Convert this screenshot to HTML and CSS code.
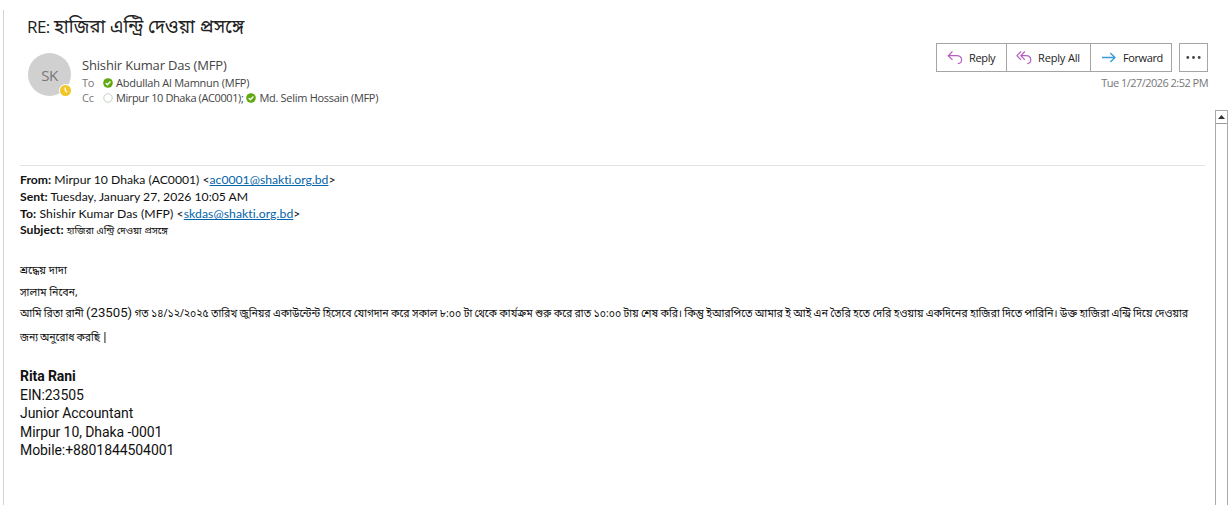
FILE: index.html
```html
<!DOCTYPE html>
<html lang="bn">
<head>
    <meta charset="utf-8">
    <title>Message</title>
    <link rel="stylesheet" href="styles.css">
</head>
<body>
    <div class="pane">
        <h1 class="subject"><span class="re">RE:</span> <span class="bn">হাজিরা এন্ট্রি দেওয়া প্রসঙ্গে</span></h1>
        <div class="header">
            <div class="avatar">SK
                <svg class="away" width="13" height="13" viewBox="0 0 13 13">
                    <circle cx="6.5" cy="6.5" r="6.5" fill="#fff"/>
                    <circle cx="6.5" cy="6.5" r="5.5" fill="#f2c627"/>
                    <path d="M6.2 3.6v3.2l2 1.5" fill="none" stroke="#fff" stroke-width="1.2"/>
                </svg>
            </div>
            <div class="people">
                <div class="sender"><span class="sender-name">Shishir Kumar Das (MFP)</span></div>
                <div class="row">
                    <span class="label">To</span>
                    <svg class="dot" width="10" height="10" viewBox="0 0 10 10"><circle cx="5" cy="5" r="4.8" fill="#5fa80f"/><path d="M2.7 5.1l1.7 1.7 3-3.2" fill="none" stroke="#fff" stroke-width="1.4"/></svg>
                    <span class="name">Abdullah Al Mamnun (MFP)</span>
                </div>
                <div class="row cc">
                    <span class="label">Cc</span>
                    <svg class="dot" width="10" height="10" viewBox="0 0 10 10"><circle cx="5" cy="5" r="4.2" fill="#fff" stroke="#c3d0c3"/></svg>
                    <span class="name">Mirpur 10 Dhaka (AC0001);</span>
                    <svg class="dot second" width="10" height="10" viewBox="0 0 10 10"><circle cx="5" cy="5" r="4.8" fill="#5fa80f"/><path d="M2.7 5.1l1.7 1.7 3-3.2" fill="none" stroke="#fff" stroke-width="1.4"/></svg>
                    <span class="name last">Md. Selim Hossain (MFP)</span>
                </div>
            </div>
            <div class="actions">
                <div class="buttons">
                    <div class="group">
                        <div class="btn reply">
                            <svg width="16" height="16" viewBox="0 0 16 16" fill="none" stroke="#b65fc0" stroke-width="1.2"><path d="M5.5 1.5L1.2 5.7l4.3 4.2M1.2 5.7h8.3c6.7 0 6.5 8 1.3 8"/></svg>
                            <span>Reply</span>
                        </div>
                        <div class="btn reply-all">
                            <svg width="16" height="16" viewBox="0 0 16 16" fill="none" stroke="#b65fc0" stroke-width="1.2"><path d="M5 1.5L1 5.7l4 4.2M8.8 1.5l-4 4.2 4 4.2M4.8 5.7h5.4c6 0 5.8 8 1 8"/></svg>
                            <span>Reply All</span>
                        </div>
                        <div class="btn forward">
                            <svg width="16" height="16" viewBox="0 0 16 16" fill="none" stroke="#3a9bd8" stroke-width="1.3"><path d="M1 7.5h13M9.3 3l4.7 4.5L9.3 12"/></svg>
                            <span>Forward</span>
                        </div>
                    </div>
                    <div class="more">
                        <svg width="15" height="3" viewBox="0 0 15 3" fill="#444"><circle cx="1.8" cy="1.5" r="1.4"/><circle cx="7.5" cy="1.5" r="1.4"/><circle cx="13.2" cy="1.5" r="1.4"/></svg>
                    </div>
                </div>
                <div class="date"><span>Tue 1/27/2026 2:52 PM</span></div>
            </div>
        </div>
        <div class="content">
            <div class="message">
                <div class="quoted">
                    <p><b>From:</b> Mirpur 10 Dhaka (AC0001) &lt;<a>ac0001@shakti.org.bd</a>&gt;</p>
                    <p><b>Sent:</b> Tuesday, January 27, 2026 10:05 AM</p>
                    <p class="to"><b>To:</b> Shishir Kumar Das (MFP) &lt;<a>skdas@shakti.org.bd</a>&gt;</p>
                    <p class="subj"><b>Subject:</b> <span class="bn">হাজিরা এন্ট্রি দেওয়া প্রসঙ্গে</span></p>
                </div>
                <div class="text bn">
                    <p>শ্রদ্ধেয় দাদা</p>
                    <p class="greeting">সালাম নিবেন,</p>
                    <p class="long">আমি রিতা রানী <span class="num">(23505)</span> গত ১৪/১২/২০২৫ তারিখ জুনিয়র একাউন্টেন্ট হিসেবে যোগদান করে সকাল ৮:০০ টা থেকে কার্যক্রম শুরু করে রাত ১০:০০ টায় শেষ করি। <span class="rest">কিন্তু ইআরপিতে আমার ই আই এন তৈরি হতে দেরি হওয়ায় একদিনের হাজিরা দিতে পারিনি। উক্ত হাজিরা এন্ট্রি দিয়ে দেওয়ার</span></p>
                    <p class="request">জন্য অনুরোধ করছি <span class="num bar">|</span></p>
                </div>
                <div class="signature">
                    <p><b>Rita Rani</b></p>
                    <p>EIN:23505</p>
                    <p>Junior Accountant</p>
                    <p>Mirpur 10, Dhaka -0001</p>
                    <p>Mobile:+8801844504001</p>
                </div>
            </div>
            <div class="scrollbar">
                <div class="up"><svg width="7" height="4" viewBox="0 0 7 4"><path d="M0 4L3.5 0 7 4z" fill="#333"/></svg></div>
            </div>
        </div>
    </div>
</body>
</html>
```
FILE: styles.css
```css
* {
    box-sizing: border-box;
}

body {
    margin: 0;
    height: 505px;
    padding: 10px 0 0 3px;
    overflow: hidden;
    background: #fff;
    font-family: "Open Sans", sans-serif;
    color: #222;
    white-space: nowrap;
}

p {
    margin: 0;
}

.bn {
    font-family: "Noto Sans Bengali", "Noto Sans", sans-serif;
}

.pane {
    height: 495px;
    border-left: 1px solid #d4d4d4;
}

.subject {
    margin: 0;
    height: 36px;
    padding-left: 23px;
    font-size: 17px;
    font-weight: 400;
    line-height: 34px;
}

.subject .re {
    letter-spacing: -0.6px;
}

.subject .bn {
    font-size: 18.4px;
}

.header {
    display: flex;
    height: 64px;
    padding-left: 24px;
}

.avatar {
    position: relative;
    width: 43px;
    height: 43px;
    margin-top: 7px;
    border-radius: 50%;
    background: #d0d0d0;
    color: #777;
    font-size: 15px;
    letter-spacing: -0.5px;
    line-height: 44px;
    text-align: center;
}

.away {
    position: absolute;
    right: -1px;
    bottom: -1px;
}

.people {
    margin: 11px 0 0 11px;
    color: #444;
    font-size: 11px;
}

.sender {
    height: 18px;
    font-size: 13px;
    line-height: 17px;
    letter-spacing: -0.17px;
}

.row {
    display: flex;
    align-items: center;
    height: 15px;
    letter-spacing: -0.24px;
}

.cc .name {
    letter-spacing: -0.4px;
}

.cc .last {
    letter-spacing: -0.3px;
}

.label {
    width: 21px;
    color: #777;
}

.dot {
    margin-right: 3px;
}

.dot.second {
    margin-left: 3px;
}

.actions {
    margin: -3px 21px 0 auto;
}

.buttons {
    display: flex;
    gap: 7px;
}

.group {
    display: flex;
    border: 1px solid #a5a5a5;
}

.btn {
    display: flex;
    align-items: center;
    height: 27px;
    padding-left: 10px;
    gap: 6px;
    font-size: 11px;
    letter-spacing: -0.35px;
}

.btn + .btn {
    border-left: 1px solid #a5a5a5;
}

.reply {
    width: 69px;
}

.reply-all {
    width: 84px;
    padding-left: 9px;
    letter-spacing: -0.15px;
}

.forward {
    width: 81px;
    letter-spacing: -0.4px;
}

.more {
    display: flex;
    align-items: center;
    justify-content: center;
    width: 29px;
    height: 29px;
    border: 1px solid #a5a5a5;
}

.date {
    margin-top: 3px;
    color: #777;
    font-size: 11px;
    line-height: 15px;
    text-align: right;
    letter-spacing: -0.53px;
}

.content {
    display: flex;
    height: 395px;
    padding-right: 1px;
}

.message {
    width: 1185px;
    height: 339px;
    margin: 55px auto 0 16px;
    padding-top: 5px;
    border-top: 1px solid #e3e3e3;
    color: #111;
}

.quoted {
    height: 68px;
    font-family: Lato, sans-serif;
    font-size: 12.2px;
    line-height: 17px;
    font-variant-ligatures: none;
}

.quoted .to {
    letter-spacing: 0.08px;
}

.quoted .subj {
    line-height: 15px;
}

.quoted a {
    color: #0563a8;
    text-decoration: underline;
}

.quoted .bn {
    font-size: 9.8px;
}

.text {
    height: 87px;
    margin-top: 21px;
    font-size: 11px;
    line-height: 22px;
}

.greeting {
    font-size: 10.6px;
}

.long {
    height: 23px;
    font-size: 10.5px;
    line-height: 21px;
    word-spacing: -0.35px;
}

.rest {
    font-size: 10.7px;
    word-spacing: -0.5px;
}

.request {
    font-size: 10.4px;
    word-spacing: -0.7px;
}

.num {
    font-family: Roboto, sans-serif;
    font-size: 13.2px;
    line-height: 0;
}

.bar {
    margin-left: 1px;
}

.signature {
    margin-top: 20px;
    font-family: Roboto, sans-serif;
    font-size: 14px;
    line-height: 18.5px;
    letter-spacing: -0.08px;
}

.scrollbar {
    width: 13px;
    border: 1px solid #aaa;
    border-bottom: 0;
}

.up {
    display: flex;
    align-items: center;
    justify-content: center;
    height: 13px;
    border-bottom: 1px solid #999;
}
```
